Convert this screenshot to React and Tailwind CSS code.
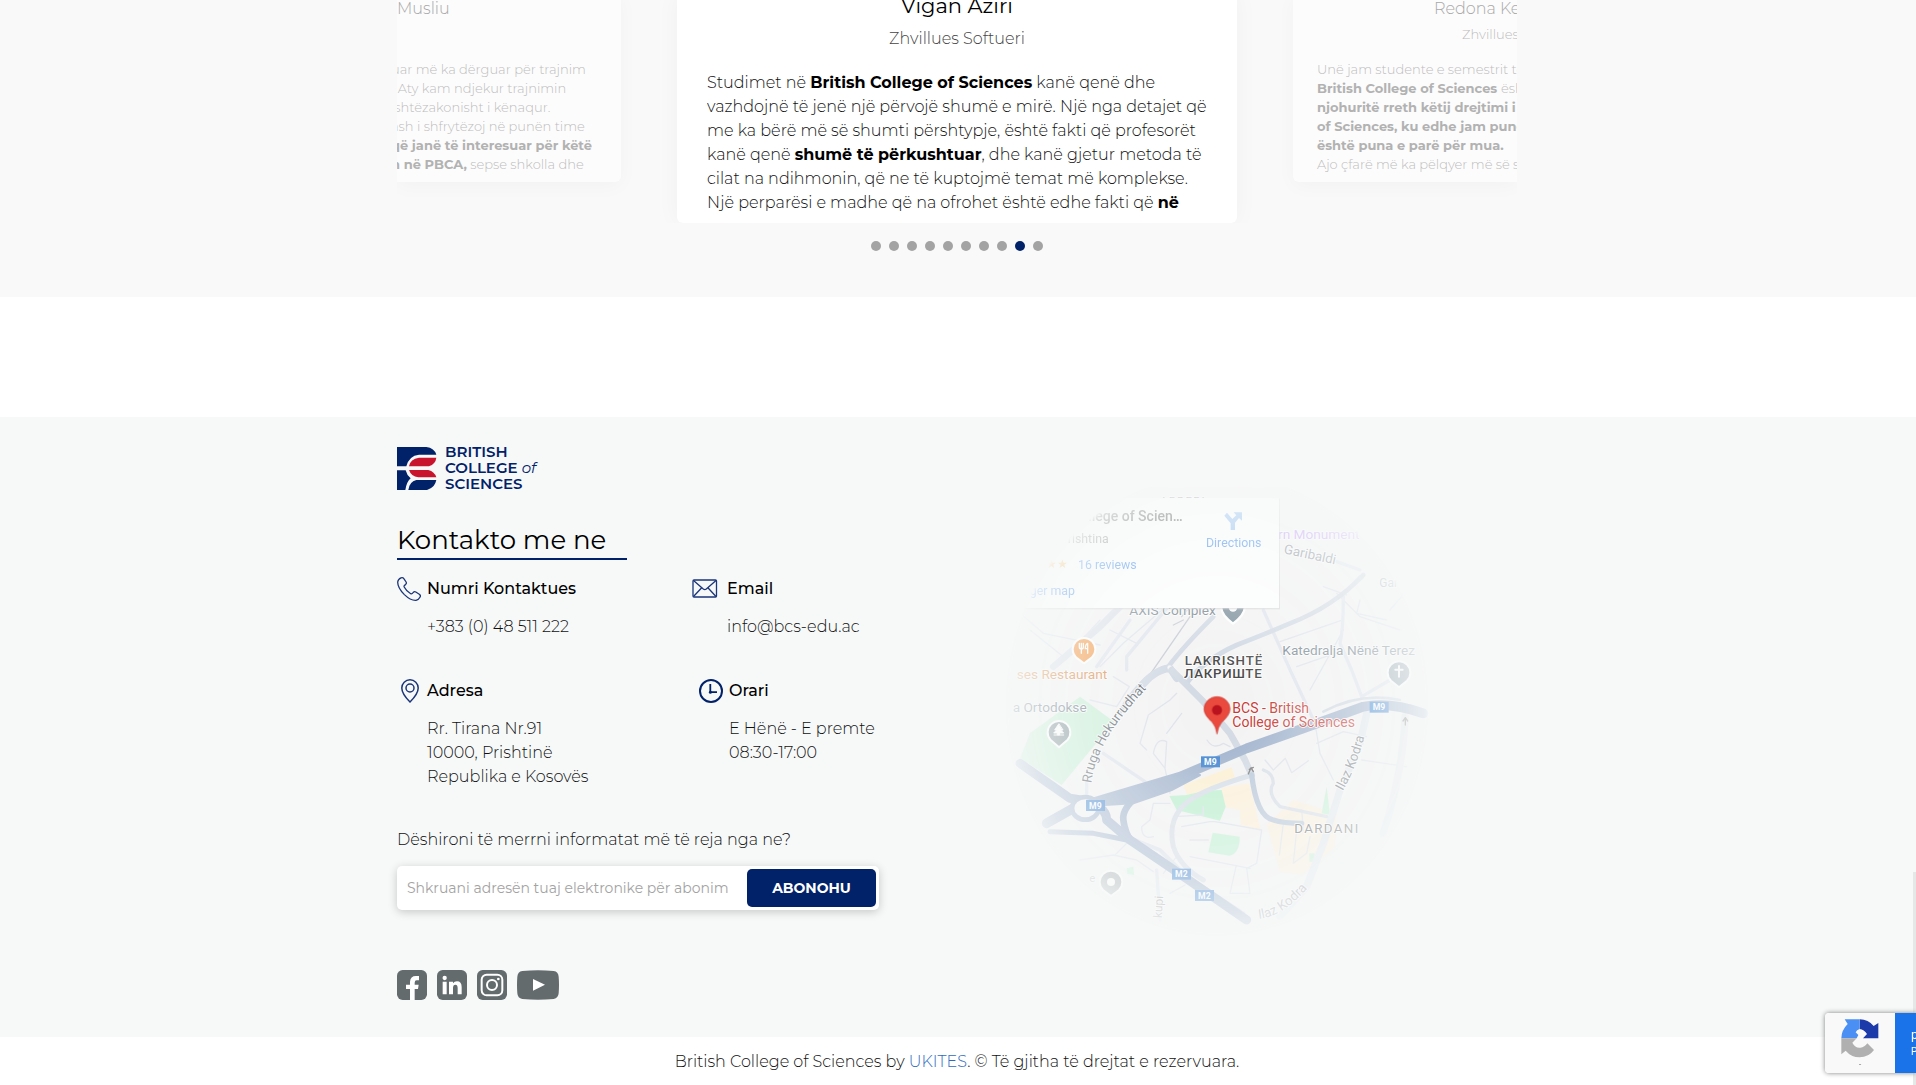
import React from "react";

const DOTS = 10;
const ACTIVE_DOT = 8;

function SideCard({ children, className }) {
  return (
    <article
      className={
        "hidden h-[189px] w-56 shrink-0 overflow-hidden whitespace-nowrap bg-white/50 text-[13px] leading-[19px] text-[#bdbdbd] shadow-[0_4px_20px_rgba(0,40,30,0.03)] lg:block " +
        className
      }
    >
      {children}
    </article>
  );
}

function Testimonials() {
  return (
    <section className="overflow-hidden bg-[#f9f9f9] pr-0.5 pb-[46px]">
      <div className="mx-auto -mt-[7px] flex max-w-[1120px] items-start justify-center gap-14 overflow-hidden">
        <SideCard className="rounded-r-md">
          <h3 className="pt-1 text-base leading-6 font-light text-[#a8a8a8]">Musliu</h3>
          <div className="mt-[39px] flex h-[121px] justify-end overflow-hidden pr-[29px] font-light">
            <div>
              <p>uar më ka dërguar për trajnim</p>
              <p>&nbsp; Aty kam ndjekur trajnimin</p>
              <p>&nbsp;shtëzakonisht i kënaqur.</p>
              <p>ash i shfrytëzoj në punën time</p>
              <p className="font-bold text-[#b2b2b2]">që janë të interesuar për këtë</p>
              <p>
                <b className="font-bold text-[#b2b2b2]">n në PBCA,</b> sepse shkolla dhe
              </p>
            </div>
          </div>
        </SideCard>

        <article className="min-w-0 flex-1 rounded-md bg-white px-[30px] pb-3 font-light shadow-[0_0_24px_rgba(0,60,50,0.04)]">
          <h3 className="pt-px text-center text-[21px] leading-6 font-normal text-black">Vigan Aziri</h3>
          <p className="mt-2 pt-px text-center leading-6 text-[#444]">Zhvillues Softueri</p>
          <div className="mt-5 h-[140px] overflow-hidden leading-6 text-[#111] lg:whitespace-nowrap">
            <p>
              Studimet në <b className="font-bold text-black">British College of Sciences</b> kanë qenë dhe
              <br />
              vazhdojnë të jenë një përvojë shumë e mirë. Një nga detajet që
              <br />
              me ka bërë më së shumti përshtypje, është fakti që profesorët
              <br />
              kanë qenë <b className="font-bold text-black">shumë të përkushtuar</b>, dhe kanë gjetur metoda të
              <br />
              cilat na ndihmonin, që ne të kuptojmë temat më komplekse.
              <br />
              Një perparësi e madhe që na ofrohet është edhe fakti që <b className="font-bold text-black">në</b>
            </p>
          </div>
        </article>

        <SideCard className="rounded-l-md">
          <h3 className="pt-1 pl-[141px] text-base leading-6 font-light text-[#a8a8a8]">Redona Kelmendi</h3>
          <p className="mt-1 pl-[169px] font-light">Zhvillues</p>
          <div className="mt-4 h-[121px] overflow-hidden pl-6 font-bold text-[#b2b2b2]">
            <p className="font-light text-[#bdbdbd]">Unë jam studente e semestrit të</p>
            <p>
              British College of Sciences <span className="font-light text-[#bdbdbd]">është</span>
            </p>
            <p>njohuritë rreth këtij drejtimi i</p>
            <p>of Sciences, ku edhe jam punë</p>
            <p>është puna e parë për mua.</p>
            <p className="font-light text-[#bdbdbd]">Ajo çfarë më ka pëlqyer më së s</p>
          </div>
        </SideCard>
      </div>
      <div className="mt-[18px] flex justify-center gap-2">
        {Array.from({ length: DOTS }, (_, i) => (
          <button
            key={i}
            type="button"
            aria-label={"Dëshmia " + (i + 1)}
            className={"size-2.5 rounded-full " + (i === ACTIVE_DOT ? "bg-[#012169]" : "bg-[#a3a3a3]")}
          />
        ))}
      </div>
    </section>
  );
}

function Logo() {
  return (
    <a href="#" className="flex w-fit items-center gap-2 text-[#012169]">
      <svg width="40" height="43" viewBox="0 0 120 129" aria-hidden="true">
        <path d="M0 0H88Q112 3 118 23H66Q36 26 28 58H0Z" fill="#012169" />
        <path d="M0 70H26Q29 84 41 94Q29 104 25 129H0Z" fill="#012169" />
        <path d="M118 99Q114 122 90 129H34Q37 104 58 99Z" fill="#012169" />
        <path d="M118 32Q116 50 96 58H36Q40 35 66 32Z" fill="#c8142d" />
        <path d="M36 69H94Q113 74 118 91H64Q42 88 36 69Z" fill="#c8142d" />
      </svg>
      <span className="text-[15px] leading-4 font-semibold">
        BRITISH
        <br />
        COLLEGE <i className="font-normal">of</i>
        <br />
        SCIENCES
      </span>
    </a>
  );
}

function PhoneIcon() {
  return (
    <svg width="24" height="24" viewBox="0 0 24 24" fill="none" stroke="#1b3579" strokeWidth="1.3" strokeLinejoin="round">
      <path d="M4 .9Q5.8 .2 7 1.8L9.1 5Q9.9 6.4 8.5 7.6Q6.6 8.7 7.2 10Q9.3 14.2 13.7 16.7Q15 17.3 16.2 15.5Q17.4 14.2 18.8 15L22.3 17.2Q24 18.5 23.1 20Q21.7 22.8 19 23.3Q13.6 23.6 7.4 17.6Q.6 10.7.7 5Q1 2.2 4 .9Z" />
    </svg>
  );
}

function MailIcon() {
  return (
    <svg width="26" height="24" viewBox="0 0 26 24" fill="none" stroke="#1b3579" strokeWidth="1.3" strokeLinejoin="round">
      <rect x="1" y="3" width="23.5" height="17" rx="1" />
      <path d="M1.5 3.5L11.3 12.100Q12.8 13.3 14.3 12.1L24 3.500M1.5 19.500L9.7 10.7M24 19.500L15.9 10.7" />
    </svg>
  );
}

function PinIcon() {
  return (
    <svg width="24" height="24" viewBox="-3 0 24 24" fill="none" stroke="#1b3579" strokeWidth="1.5">
      <path d="M10 23Q1.8 14.8 1.8 9A8.2 8.2 0 0 1 18.2 9Q18.2 14.8 10 23Z" />
      <circle cx="10" cy="9" r="4" />
    </svg>
  );
}

function ClockIcon() {
  return (
    <svg width="24" height="24" viewBox="0 0 24 24" fill="none" stroke="#012169">
      <circle cx="12" cy="12" r="11" strokeWidth="2" />
      <path d="M11.3 5V13.2H18" strokeWidth="1.8" />
      <circle cx="11.4" cy="13.2" r="1.5" fill="#012169" stroke="none" />
    </svg>
  );
}

function Contact({ icon, slot, title, children }) {
  return (
    <div className="flex">
      <div className={"flex h-6 shrink-0 " + slot}>{icon}</div>
      <div className="leading-6">
        <h3 className="font-medium text-black">{title}</h3>
        <div className="mt-3.5 font-light text-[#111]">{children}</div>
      </div>
    </div>
  );
}

function Socials() {
  return (
    <div className="flex gap-2.5">
      <a href="#" aria-label="Facebook">
        <svg width="30" height="30" viewBox="0 0 90 90">
          <rect width="90" height="90" rx="17" fill="#636b6d" />
          <path d="M39 90V57H27V44H39V35Q40 18 57 18H66V31H59Q53 31 53 38V44H65L63 57H53V90Z" fill="#fff" />
        </svg>
      </a>
      <a href="#" aria-label="LinkedIn">
        <svg width="30" height="30" viewBox="0 0 90 90" fill="#fff">
          <rect width="90" height="90" rx="17" fill="#636b6d" />
          <circle cx="23" cy="24" r="6.500" />
          <path d="M17 35H29V73H17ZM36 35H48V40Q52 34 60 34Q74 34 74 51V73H62V54Q62 44 55 44Q48 44 48 54V73H36Z" />
        </svg>
      </a>
      <a href="#" aria-label="Instagram">
        <svg width="30" height="30" viewBox="0 0 90 90" fill="none" stroke="#fff" strokeWidth="6">
          <rect width="90" height="90" rx="17" fill="#636b6d" stroke="none" />
          <rect x="14" y="14" width="62" height="62" rx="15" />
          <circle cx="45" cy="45" r="15" />
          <circle cx="64" cy="27" r="4" fill="#fff" stroke="none" />
        </svg>
      </a>
      <a href="#" aria-label="YouTube">
        <svg width="42" height="30" viewBox="0 0 126 90">
          <path d="M16 3Q63-1 110 3Q124 5 125 20Q127 45 125 70Q124 84 110 87Q63 91 16 87Q2 85 1 70Q-1 45 1 20Q2 5 16 3Z" fill="#636b6d" />
          <path d="M48 27L84 44L48 62Z" fill="#fff" />
        </svg>
      </a>
    </div>
  );
}

function Shield({ x, y, children }) {
  return (
    <g>
      <rect x={x - 28} y={y - 16} width="57" height="33" fill="#4285d0" />
      <text x={x} y={y + 10} textAnchor="middle" fontSize="26" fontWeight="700" fill="#fff">
        {children}
      </text>
    </g>
  );
}

function LocationMap() {
  return (
    <svg
      viewBox="0 0 1380 1440"
      className="w-[460px] max-w-full font-['Roboto',sans-serif]"
      role="img"
      aria-label="Harta e kolegjit"
    >
      <defs>
        <radialGradient id="fade" gradientUnits="userSpaceOnUse" cx="0" cy="0" r="1" gradientTransform="translate(681 705) scale(638 697)">
          <stop offset="0" stopColor="#fff" />
          <stop offset=".18" stopColor="#fff" stopOpacity=".96" />
          <stop offset=".4" stopColor="#fff" stopOpacity=".7" />
          <stop offset=".7" stopColor="#fff" stopOpacity=".46" />
          <stop offset=".9" stopColor="#fff" stopOpacity=".26" />
          <stop offset=".98" stopColor="#fff" stopOpacity=".14" />
          <stop offset="1" stopColor="#fff" stopOpacity="0" />
        </radialGradient>
        <mask id="vignette" maskUnits="userSpaceOnUse" x="0" y="0" width="1380" height="1440">
          <rect y="52" width="1380" height="1388" fill="url(#fade)" />
        </mask>
        <path id="street-hek" d="M304 940Q312 870 360 790Q400 730 470 655" />
        <path id="street-ilaz" d="M1058 964Q1110 870 1130 770" />
        <path id="street-ilaz2" d="M806 1347Q890 1340 985 1215" />
      </defs>
      <g mask="url(#vignette)" fill="none" strokeLinecap="round" strokeLinejoin="round">
        <rect width="1380" height="1440" fill="#f4f3f3" />
        <path d="M120 790L270 680L372 755L215 945L90 865Z" fill="#c8f0d6" />
        <path d="M580 945L725 892L737 930L595 985Z" fill="#fdf0d3" />
        <path d="M695 953L778 940L812 1080L752 1065L750 1020L700 1010Z" fill="#fdf0d9" />
        <path d="M830 1065L910 990L1040 1030L1035 1130L940 1215L870 1205Z" fill="#fbf1df" />
        <path d="M538 978L590 975L645 962L695 960L707 1010L690 1052L560 1020Z" fill="#bdf0cf" />
        <path d="M668 1088L749 1100Q750 1150 718 1157L655 1147Z" fill="#c4f2d5" />
        <path d="M1010 950L1020 1035L995 1030ZM958 1150H974V1175H958ZM410 1195L430 1190L432 1215L412 1212Z" fill="#c4f2d5" />

        <g stroke="#dde2ea" strokeWidth="4">
          <path d="M90 430L160 490L330 525M120 480L220 560M360 480L440 520M330 590L400 520L540 400M200 590L330 450M370 620L418 650L380 710L300 690" />
          <path d="M870 515L1052 452M920 590L1035 550M960 660L1060 480M1000 350L1070 375M1040 370L1110 440L1230 480M1110 390L1100 430L1190 450M1260 350L1200 420" />
          <path d="M540 690L475 735L450 820L470 840M540 690L560 670M490 850Q500 800 530 815L525 895L490 850M525 895L540 970M575 730L530 790" />
          <path d="M651 810Q670 840 700 820L720 830M825 870L850 900L886 865L905 908L955 872M975 760L990 850L1030 930M980 820L1060 785L1130 800M1115 870L1250 890" />
          <path d="M540 1000L490 1000L480 1050L455 1070Q455 1110 490 1100M550 1040L640 1035V1010M575 1070L660 1055L675 1055L815 1080L800 1180L770 1195L780 1270L720 1270L738 1190M600 1110L655 1110M600 1160L780 1195" />
          <path d="M880 1060L868 1155M920 1080L910 1180L950 1150L960 1100M935 1020L940 1080M270 1170L370 1155L440 1170L490 1205M375 1155L420 1110M520 1210L560 1160M540 1270L585 1245" />
        </g>
        <path d="M600 440L455 650M580 450L550 465M600 410L575 440" stroke="#c3c8d0" strokeWidth="4" />

        <g stroke="#dfe4ed" strokeWidth="10">
          <path d="M410 600V560L530 415M320 590L420 450" />
          <path d="M1110 320L1060 375Q1060 480 1050 520L1085 600L1115 680M820 420L905 610L980 770M1040 275L1110 300" />
          <path d="M290 970V930M340 850L465 935M500 1200L510 1350M1115 680L1200 630" />
        </g>
        <path d="M190 590L330 470L400 400" stroke="#dbe1ea" strokeWidth="20" />
        <path d="M1245 740Q1240 900 1180 1090M1130 730L1110 820L1050 960L1000 1120L950 1250L870 1340" stroke="#e3e8ee" strokeWidth="22" />
        <path d="M390 725Q470 600 535 590Q580 530 670 440M590 640Q640 570 740 525Q830 490 900 460Q1030 410 1120 315" stroke="#d0d8e3" strokeWidth="14" />
        <path d="M450 655Q490 600 540 595L560 625" stroke="#d0d8e3" strokeWidth="22" />
        <circle cx="539" cy="593" r="7" fill="#f5f6f7" />
        <path d="M545 600L640 695L720 790L765 870L785 915" stroke="#d3dae3" strokeWidth="20" />
        <path d="M785 915Q650 955 600 990Q530 1040 550 1130Q570 1190 640 1230" stroke="#d7dee7" strokeWidth="15" />
        <path d="M820 900Q850 910 850 940Q830 970 870 1010L1010 1040" stroke="#d7dee7" strokeWidth="10" />
        <path d="M785 915Q800 1040 850 1050Q880 1060 935 1060" stroke="#b9c7d9" strokeWidth="16" />
        <path d="M435 1110L510 1140L590 1220L760 1330" stroke="#dce2ea" strokeWidth="12" />
        <g stroke="#a1b3cd">
          <path d="M90 880L240 985Q350 1000 350 1050L420 1110L560 1205L770 1350" strokeWidth="27" />
          <path d="M170 1060L250 1015L350 985L570 920L770 835L940 775L1120 710Q1200 695 1300 730" strokeWidth="29" />
          <path d="M460 965Q395 1010 400 1050Q405 1090 425 1115" strokeWidth="20" />
          <path d="M180 1085L310 1090L410 1110" strokeWidth="15" />
          <path d="M340 980L470 945L600 908L630 915L545 960L430 1000L345 1005Z" fill="#a1b3cd" strokeWidth="6" />
        </g>
        <path d="M1000 725Q1110 665 1230 690" stroke="#d0d8e3" strokeWidth="8" />
        <ellipse cx="286" cy="1015" rx="40" ry="34" fill="#f5f6f7" stroke="#a1b3cd" strokeWidth="14" />

        <g stroke="none">
          <Shield x={1167} y={711}>M9</Shield>
          <Shield x={661} y={875}>M9</Shield>
          <Shield x={316} y={1006}>M9</Shield>
          <Shield x={574} y={1212}>M2</Shield>
          <Shield x={643} y={1276}>M2</Shield>

          <g stroke="#fff" strokeWidth="5" paintOrder="stroke" fontSize="40">
            <text x="510" y="105" fontSize="34" letterSpacing="4" fill="#888">ARBERI</text>
            <text x="864" y="207" fontSize="41" fill="#b98af5">rn Monument</text>
            <text transform="translate(880 250) rotate(12)" fill="#7b8590">Garibaldi</text>
            <text x="1168" y="352" fontSize="36" fill="#89929a">Gar</text>
            <text x="418" y="436" fontSize="41" fill="#6b7a85">AXIS Complex</text>
            <text x="877" y="556" fontSize="41" fill="#6b7a85">Katedralja Nënë Terez</text>
            <text x="584" y="584" fontSize="40" letterSpacing="3" fontWeight="500" fill="#444">LAKRISHTË</text>
            <text x="582" y="624" fontSize="40" letterSpacing="2" fontWeight="500" fill="#444">ЛАКРИШТЕ</text>
            <text x="80" y="628" fontSize="41" fill="#d98238">ses Restaurant</text>
            <text x="68" y="727" fontSize="41" fill="#6b7a85">a Ortodokse</text>
            <text x="727" y="729" fontSize="42" fill="#c5352f">BCS - British</text>
            <text x="727" y="772" fontSize="42" fill="#c5352f">College of Sciences</text>
            <text fill="#596269"><textPath href="#street-hek">Rruga Hekurrudhat</textPath></text>
            <text fill="#6e757b"><textPath href="#street-ilaz">Ilaz Kodra</textPath></text>
            <text fill="#8e959b"><textPath href="#street-ilaz2">Ilaz Kodra</textPath></text>
            <text x="913" y="1088" letterSpacing="4" fill="#666">DARDANI</text>
            <text x="298" y="1235" fontSize="34" fill="#999">e</text>
            <text transform="translate(515 1345) rotate(-86)" fontSize="36" fill="#888">kupi</text>
          </g>

          <path d="M729 461Q695 435 694 415A35 35 0 0 1 764 415Q763 435 729 461Z" fill="#748896" stroke="#fff" strokeWidth="7" />
          <circle cx="729" cy="412" r="13" fill="#fff" />
          <path d="M282 580L258 562A34 34 0 1 1 306 562Z" fill="#f5943c" stroke="#fff" strokeWidth="6" />
          <path d="M268 520V531Q268 537 274 537Q280 537 280 531V520M274 520V550M293 550V520Q286 522 286 536H293" stroke="#fff" strokeWidth="4" />
          <path d="M1227 652L1203 632A34 34 0 1 1 1251 632Z" fill="#8d9eaa" stroke="#fff" strokeWidth="6" />
          <path d="M1227 588V620M1216 599H1238" stroke="#fff" strokeWidth="6" />
          <path d="M207 832L181 809A34 34 0 1 1 233 809Z" fill="#7f9095" stroke="#fff" strokeWidth="6" />
          <path d="M206 762L194 780H200L191 789H221L212 780H218ZM203 789H209V795H203ZM192 795H221" fill="#fff" stroke="#fff" strokeWidth="3" />
          <path d="M363 1278L339 1260A34 34 0 1 1 387 1260Z" fill="#929a9f" stroke="#fff" strokeWidth="6" />
          <circle cx="363" cy="1236" r="12" fill="#fff" />
          <path d="M1246 765V745M1239 753L1246 743L1253 753M775 912L783 893L790 905M778 898L790 892" stroke="#777" strokeWidth="4" />

          <rect y="86" width="870" height="332" fill="#ccc" opacity=".6" />
          <rect y="84" width="867" height="330" fill="#fff" />
          <g fontSize="37" opacity=".85">
            <text x="578" y="153" textAnchor="end" fontWeight="500" fontSize="42" fill="#222">College of Scien…</text>
            <text x="356" y="219" textAnchor="end" fill="#5b5b5b">Prishtina</text>
            <text x="168" y="295" fontSize="36" fill="#f5a623">★★</text>
            <text x="264" y="297" fill="#1a73e8">16 reviews</text>
            <text x="255" y="375" textAnchor="end" fill="#1a73e8">View larger map</text>
            <text x="648" y="231" fill="#1a73e8">Directions</text>
          </g>
          <path d="M722 180V160L703 137L711 128L727 147L739 136L731 127H756V152L747 144L735 158V180Z" fill="#8abaf0" />
        </g>
      </g>
      <path d="M681 792Q678 770 667 757Q642 735 642 717A39 37 0 0 1 720 717Q720 735 695 757Q684 770 681 792Z" fill="#ea4a3d" stroke="#c5352f" strokeWidth="2" />
      <circle cx="681" cy="720" r="15" fill="#b9131f" />
    </svg>
  );
}

function Footer() {
  return (
    <footer className="mt-[120px] bg-[#f7f9f9] pt-[27px] pr-0.5 pb-[37px]">
      <div className="mx-auto flex max-w-[1120px] flex-wrap gap-x-[111px]">
        <div className="w-[482px] max-w-full">
          <Logo />
          <h2 className="mt-[30px] w-[230px] border-b-2 border-[#012169] text-[26px] leading-9 font-normal whitespace-nowrap text-black">
            Kontakto me ne
          </h2>
          <div className="mt-[17px] grid grid-cols-[295px_1fr] gap-y-10">
            <Contact icon={<PhoneIcon />} slot="w-[30px]" title="Numri Kontaktues">
              <p>+383 (0) 48 511 222</p>
            </Contact>
            <Contact icon={<MailIcon />} slot="w-[35px]" title="Email">
              <p>info@bcs-edu.ac</p>
            </Contact>
            <Contact icon={<PinIcon />} slot="w-[30px]" title="Adresa">
              <p>
                Rr. Tirana Nr.91
                <br />
                10000, Prishtinë
                <br />
                Republika e Kosovës
              </p>
            </Contact>
            <Contact icon={<ClockIcon />} slot="w-[37px] justify-end pr-1.5" title="Orari">
              <p>
                E Hënë - E premte
                <br />
                08:30-17:00
              </p>
            </Contact>
          </div>
          <form className="mt-[39px]" onSubmit={(e) => e.preventDefault()}>
            <label htmlFor="newsletter" className="block leading-6 font-light text-[#111]">
              Dëshironi të merrni informatat më të reja nga ne?
            </label>
            <div className="mt-3.5 flex rounded-[5px] bg-white p-[3px] shadow-[0_2px_10px_rgba(0,0,0,0.2)]">
              <input
                id="newsletter"
                type="email"
                placeholder="Shkruani adresën tuaj elektronike për abonim"
                className="min-w-0 flex-1 px-[7px] text-sm font-normal outline-none placeholder:text-[#a3a3a3]"
              />
              <button type="submit" className="h-[38px] w-[129px] rounded-[5px] bg-[#012169] text-sm font-bold text-white">
                ABONOHU
              </button>
            </div>
          </form>
          <div className="mt-[60px]">
            <Socials />
          </div>
        </div>
        <div className="mt-[26px]">
          <LocationMap />
        </div>
      </div>
    </footer>
  );
}

function RecaptchaBadge() {
  return (
    <aside className="fixed right-0 bottom-3 flex h-[60px] w-[91px] overflow-hidden rounded-l-sm shadow-[0_0_5px_gray]">
      <div className="flex w-[70px] shrink-0 flex-col items-center bg-[#f9f9f9] pt-1.5">
        <svg width="38" height="39" viewBox="0 0 114 117" aria-hidden="true">
          <path d="M56 1Q82 2 98 21L112 12V58H66L78 45Q69 31 56 30Z" fill="#1c3aa9" />
          <path d="M56 1V30Q47 32 44 40L52 48L47 58H1Q1 34 20 15L11 1Z" fill="#4a90f4" />
          <path d="M1 58H47L34 71Q43 88 58 86Q71 85 79 73L99 93Q83 115 56 115Q31 115 14 95L1 106Z" fill="#b0b0b0" />
        </svg>
        <span className="text-[8px] leading-3 text-[#555]">-</span>
      </div>
      <div className="flex-1 bg-[#1a73e8] pt-3 pl-4 font-['Roboto',sans-serif] whitespace-nowrap text-white">
        <p className="text-[13px] leading-5">protected by reCAPTCHA</p>
        <p className="text-[10px] leading-3.5">Privacy - Terms</p>
      </div>
    </aside>
  );
}

export default function App() {
  return (
    <div className="min-h-screen overflow-x-hidden bg-white font-['Montserrat','Inter',sans-serif] text-base">
      <Testimonials />
      <Footer />
      <p className="pt-[13px] pr-0.5 pb-[11px] text-center leading-6 font-light text-[#111]">
        British College of Sciences by{" "}
        <a href="#" className="text-[#2e6bc0]">
          UKITES
        </a>
        . © Të gjitha të drejtat e rezervuara.
      </p>
      <div className="fixed right-0 bottom-0 h-[213px] w-[3px] bg-[#e6e8e8]" />
      <RecaptchaBadge />
    </div>
  );
}
